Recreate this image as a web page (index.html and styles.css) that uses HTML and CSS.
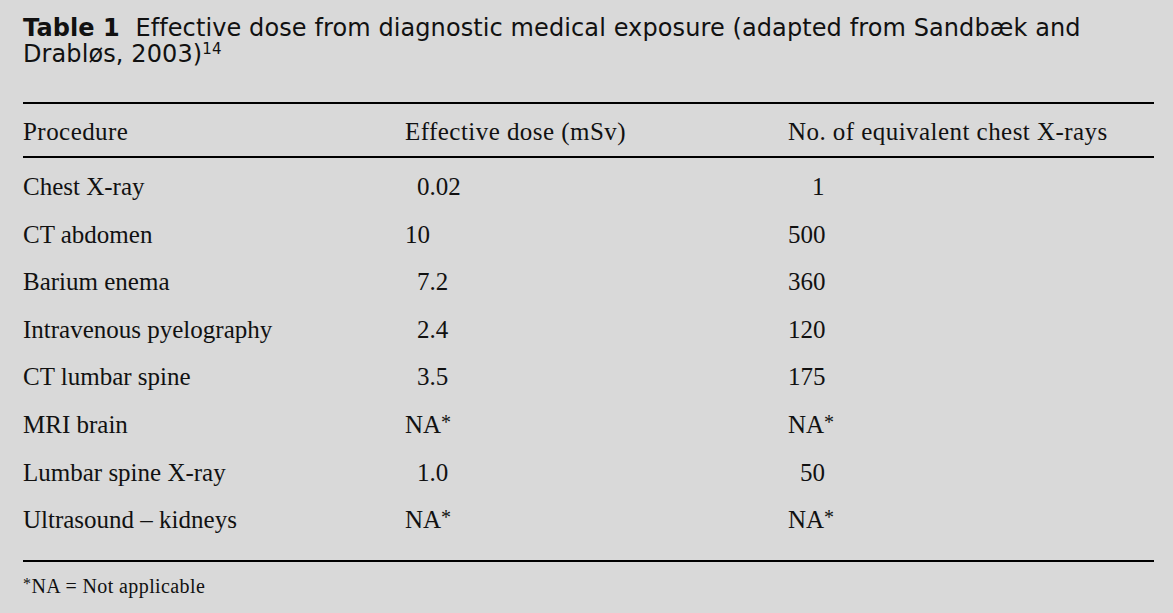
FILE: index.html
```html
<!DOCTYPE html>
<html>
<head>
<meta charset="utf-8">
<link rel="stylesheet" href="styles.css">
</head>
<body>
<div class="page">
  <h1 class="title"><span class="label">Table 1</span>&nbsp; Effective dose from diagnostic medical exposure (adapted from Sandbæk and<br>Drabløs, 2003)<sup>14</sup></h1>
  <table class="data">
    <thead>
      <tr>
        <th class="c1">Procedure</th>
        <th class="c2">Effective dose (mSv)</th>
        <th class="c3">No. of equivalent chest X-rays</th>
      </tr>
    </thead>
    <tbody>
      <tr class="first"><td>Chest X-ray</td><td><span class="d1">0.02</span></td><td><span class="d2">1</span></td></tr>
      <tr><td>CT abdomen</td><td>10</td><td>500</td></tr>
      <tr><td>Barium enema</td><td><span class="d1">7.2</span></td><td>360</td></tr>
      <tr><td>Intravenous pyelography</td><td><span class="d1">2.4</span></td><td>120</td></tr>
      <tr><td>CT lumbar spine</td><td><span class="d1">3.5</span></td><td>175</td></tr>
      <tr><td>MRI brain</td><td>NA<span class="ast">*</span></td><td>NA<span class="ast">*</span></td></tr>
      <tr><td>Lumbar spine X-ray</td><td><span class="d1">1.0</span></td><td><span class="d1">50</span></td></tr>
      <tr class="last"><td>Ultrasound – kidneys</td><td>NA<span class="ast">*</span></td><td>NA<span class="ast">*</span></td></tr>
    </tbody>
  </table>
  <p class="note"><span class="ast">*</span>NA = Not applicable</p>
</div>
</body>
</html>
```

FILE: styles.css
```css
html, body {
  margin: 0;
  padding: 0;
  background: #d9d9d9;
}

body {
  color: #111;
}

.page {
  padding: 0 19px 0 23px;
}

.title {
  margin: 0;
  padding-top: 16px;
  font-family: "DejaVu Sans", "Open Sans", sans-serif;
  font-weight: normal;
  font-size: 24px;
  line-height: 25.5px;
  letter-spacing: 0.1px;
  white-space: nowrap;
}

.title .label {
  font-weight: bold;
}

.title sup {
  font-size: 15px;
  line-height: 0;
  vertical-align: 8px;
}

.data {
  margin-top: 35px;
  width: 100%;
  border-collapse: collapse;
  font-family: "Liberation Serif", "Times New Roman", serif;
  font-size: 25px;
}

.data th,
.data td {
  padding: 0;
  text-align: left;
  font-weight: normal;
  line-height: 47.6px;
  white-space: nowrap;
}

.data thead tr {
  border-top: 2px solid #000;
  border-bottom: 2px solid #000;
}

.data thead th {
  padding-top: 4px;
  line-height: 48px;
  letter-spacing: 0.45px;
}

.data .c1 { width: 382px; }
.data .c2 { width: 383px; }

.data tbody tr.first td { padding-top: 5px; }
.data tbody tr.last td { padding-bottom: 16px; }
.data tbody tr.last { border-bottom: 2px solid #000; }

.d1 { padding-left: 12px; }
.d2 { padding-left: 24px; }

.ast {
  font-size: 0.8em;
  vertical-align: 0.22em;
  line-height: 0;
}

.note {
  margin: 12px 0 0;
  font-family: "Liberation Serif", "Times New Roman", serif;
  font-size: 20px;
  letter-spacing: 0.4px;
  line-height: 24px;
}
```
